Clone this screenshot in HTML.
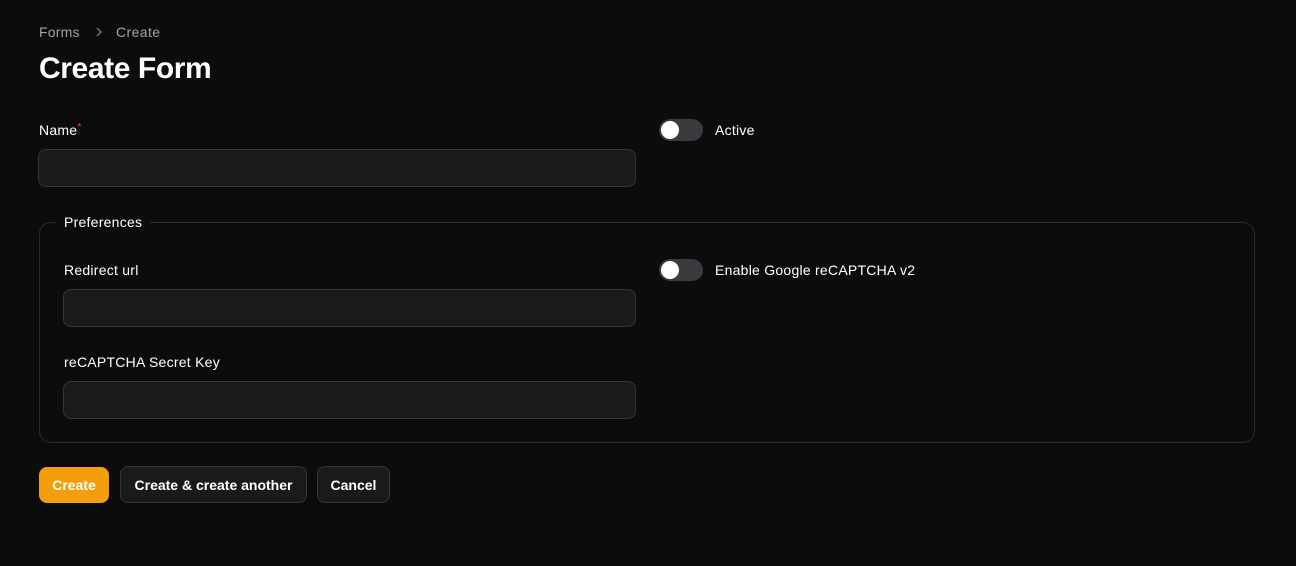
<!DOCTYPE html>
<html><head><style>
body{margin:0;background:#0c0c0c;width:1296px;height:566px;position:relative;font-family:"Liberation Sans",sans-serif;color:#fff;overflow:hidden}
.a{position:absolute}
.lbl{font-size:14px;font-weight:500;color:#fff;letter-spacing:0.25px}
.inp{position:absolute;background:#1a1a1a;border:1px solid #343434;border-radius:8px;box-sizing:border-box}
.tog{position:absolute;width:44px;height:22px;border-radius:11px;background:#3a3a3f}
.tog:after{content:"";position:absolute;left:2px;top:2px;width:18px;height:18px;border-radius:50%;background:#fff}
.btn{position:absolute;top:466px;height:37px;box-sizing:border-box;border-radius:8px;font-size:14px;font-weight:bold;display:flex;align-items:center;justify-content:center;background:#1a1a1a;border:1px solid #363636}
</style></head><body>
<div class="a" style="left:39px;top:24px;font-size:14px;color:#a1a1aa;letter-spacing:0.2px">Forms</div>
<svg class="a" style="left:93px;top:26px" width="12" height="12" viewBox="0 0 12 12"><path d="M4 2l4 4-4 4" fill="none" stroke="#71717a" stroke-width="1.5"/></svg>
<div class="a" style="left:116px;top:24px;font-size:14px;color:#a1a1aa;letter-spacing:0.4px">Create</div>
<div class="a" style="left:39px;top:52px;font-size:30px;font-weight:bold;letter-spacing:-0.4px">Create Form</div>
<div class="a lbl" style="left:39px;top:122px">Name<span style="color:#ef4444;font-size:10px;vertical-align:top">*</span></div>
<div class="inp" style="left:38px;top:149px;width:598px;height:38px"></div>
<div class="tog" style="left:659px;top:119px"></div>
<div class="a lbl" style="left:715px;top:122px">Active</div>
<div class="a" style="left:39px;top:222px;width:1216px;height:221px;border:1px solid #2a2a2a;border-radius:12px;box-sizing:border-box"></div>
<div class="a lbl" style="left:56px;top:214px;background:#0c0c0c;padding:0 8px">Preferences</div>
<div class="a lbl" style="left:64px;top:262px">Redirect url</div>
<div class="inp" style="left:63px;top:289px;width:573px;height:38px"></div>
<div class="a lbl" style="left:64px;top:354px">reCAPTCHA Secret Key</div>
<div class="inp" style="left:63px;top:381px;width:573px;height:38px"></div>
<div class="tog" style="left:659px;top:259px"></div>
<div class="a lbl" style="left:715px;top:262px">Enable Google reCAPTCHA v2</div>
<div class="btn" style="left:39px;width:70px;background:#f59e0b;border:none;top:467px;height:36px">Create</div>
<div class="btn" style="left:120px;width:187px">Create &amp; create another</div>
<div class="btn" style="left:317px;width:73px">Cancel</div>
</body></html>
